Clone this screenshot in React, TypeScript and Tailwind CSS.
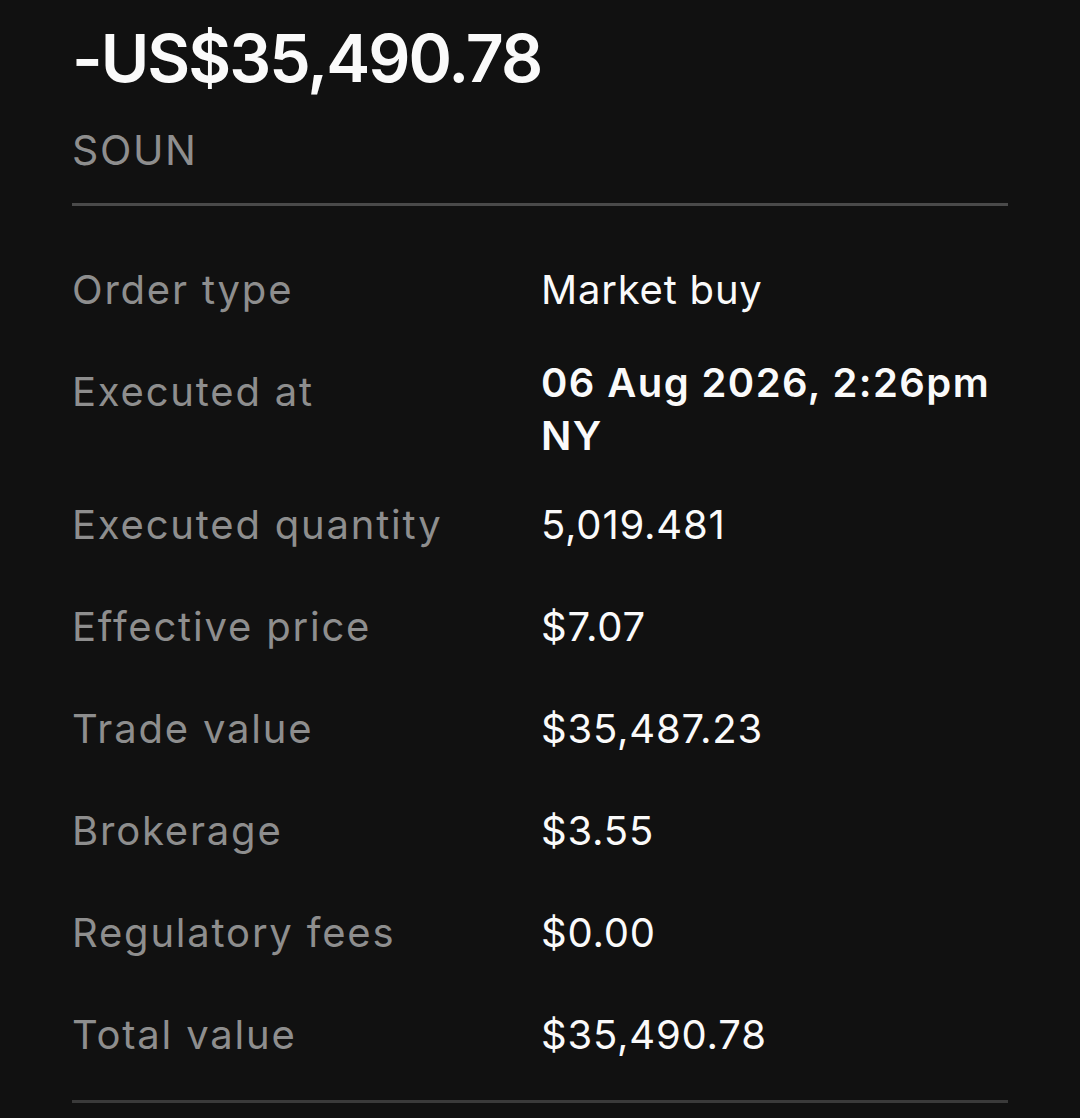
const rows: { label: string; value: string; bold?: boolean }[] = [
  { label: "Order type", value: "Market buy" },
  { label: "Executed at", value: "06 Aug 2026, 2:26pm NY", bold: true },
  { label: "Executed quantity", value: "5,019.481" },
  { label: "Effective price", value: "$7.07" },
  { label: "Trade value", value: "$35,487.23" },
  { label: "Brokerage", value: "$3.55" },
  { label: "Regulatory fees", value: "$0.00" },
  { label: "Total value", value: "$35,490.78" },
];

export default function App() {
  return (
    <div
      className="min-h-[1118px] w-full bg-[#111111] text-[#fafafa]"
      style={{ fontFamily: "Inter, 'Noto Sans', sans-serif" }}
    >
      <div className="px-[72px]">
        <h1 className="pt-[16px] text-[66px] font-semibold leading-[84px] tracking-[-0.03em]">
          -US$35,490.78
        </h1>
        <div className="mt-[25px] text-[41px] leading-[50px] tracking-[0.04em] text-[#8e8e8e]">
          SOUN
        </div>
        <div className="mt-[28px] h-[3px] bg-[#4a4a4a]" />

        <div className="pt-[33px]">
          {rows.map((row) =>
            row.bold ? (
              <div key={row.label} className="flex pt-[25px] pb-[12px]">
                <div className="w-[469px] shrink-0 text-[40px] leading-[52px] tracking-[0.045em] text-[#8e8e8e]">
                  {row.label}
                </div>
                <div className="-mt-[10px] max-w-[470px] text-[40px] font-semibold leading-[53px] tracking-[0.035em]">
                  06 Aug 2026, 2:26pm
                  <br />
                  NY
                </div>
              </div>
            ) : (
              <div key={row.label} className="flex py-[25px]">
                <div className="w-[469px] shrink-0 text-[40px] leading-[52px] tracking-[0.045em] text-[#8e8e8e]">
                  {row.label}
                </div>
                <div className="text-[40px] leading-[52px] tracking-[0.02em]">{row.value}</div>
              </div>
            )
          )}
        </div>
        <div className="mt-[14px] h-[3px] bg-[#3a3a3a]" />
      </div>
    </div>
  );
}
